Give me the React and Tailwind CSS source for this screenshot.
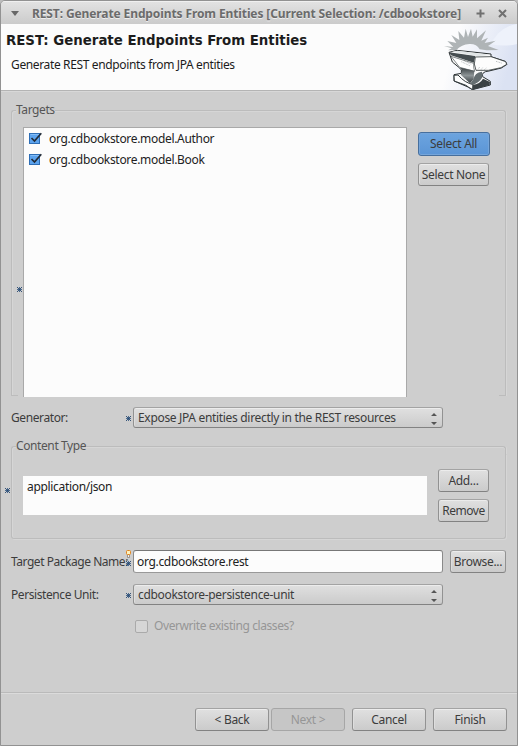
import React from "react";

const RAISED =
  "flex shrink-0 items-center whitespace-nowrap rounded-[3px] border border-t-[#a3a3a3] border-x-[#929292] border-b-[#828282] bg-linear-to-b from-[#e0e0e0] to-[#cbcbcb] shadow-[inset_0_1px_0_#ececec,inset_1px_0_0_#dedede]";

function Button({ className, children }) {
  return <button className={`${RAISED} h-[23px] justify-center ${className}`}>{children}</button>;
}

function Required({ className = "" }) {
  return (
    <svg className={`h-[5px] w-[5px] shrink-0 ${className}`} viewBox="0 0 5 5" shapeRendering="crispEdges">
      <path d="M2 0h1v5h-1zM0 2h5v1h-5z" fill="#4a6a8e" />
      <path d="M0 0h1v1h-1zM4 0h1v1h-1zM1 1h1v1h-1zM3 1h1v1h-1zM1 3h1v1h-1zM3 3h1v1h-1zM2 2h1v1h-1zM0 4h1v1h-1zM4 4h1v1h-1z" fill="#1d3f6a" opacity=".85" />
    </svg>
  );
}

function Combo({ className, children }) {
  return (
    <div className={`${RAISED} h-[21px] w-[310px] justify-between pl-1 pr-[5px] ${className}`}>
      <span>{children}</span>
      <svg className="mt-0.5 h-3 w-[6px]" viewBox="0 0 6 12">
        <path d="M3 0L6 3H0zM0 9H6L3 12z" fill="#555" />
      </svg>
    </div>
  );
}

function Checked() {
  return (
    <svg className="-mt-px h-[13px] w-[14px] shrink-0" viewBox="0 0 14 13">
      <rect x=".5" y="1.5" width="10" height="10" fill="#5ca3ee" stroke="#2d6db5" />
      <path d="M1.5 2.5H10" stroke="#83bdf7" />
      <path d="M2.5 6L5.5 9L12.3 1.2" fill="none" stroke="#202b38" strokeWidth="1.7" />
    </svg>
  );
}

function Anvil() {
  return (
    <svg className="h-[66px] w-[77px] shrink-0" viewBox="0 6 231 198">
      <defs>
        <linearGradient id="sky" x1="0" x2="1" y1="0" y2=".25">
          <stop offset="0.25" stopColor="#fcfcfd" />
          <stop offset="1" stopColor="#dbe2f3" />
        </linearGradient>
        <linearGradient id="iron" x1="0" x2="0" y1="0" y2="1">
          <stop offset="0" stopColor="#3b4144" />
          <stop offset=".5" stopColor="#8d9496" />
          <stop offset="1" stopColor="#373d40" />
        </linearGradient>
      </defs>
      <path d="M0 6H231V204H0z" fill="url(#sky)" />
      <path d="M175 34Q200 10 231 6V66Q195 75 150 66z" fill="#eef2fb" />
      <path
        d="M12 72L40 75L22 57L49 63L34 39L58 54L55 27L72 47L77 20L84 45L93 20L98 44L111 22L111 49L138 25L124 56L144 47L134 63L167 56L144 72L176 84L140 85L119 82Q110 65 88 66Q65 68 49 84L24 85L35 79z"
        fill="#afb4b6"
      />
      <path
        d="M27 91L51 85L153 96L153 104L196 118L201 127L184 138L147 147Q123 149 128 164L151 178L151 189L97 203L84 195L42 177L42 158L64 154Q67 142 59 138L37 120z"
        fill="#fafafa"
        stroke="#292f31"
        strokeWidth="3"
        strokeLinejoin="round"
      />
      <path d="M27 91L106 102L102 122L33 100z" fill="#464e51" />
      <path d="M35 89L53 86L150 98L116 103z" fill="#e1e5e6" />
      <path d="M33 103L101 124Q100 139 104 148L59 136z" fill="#fff" stroke="#444b4d" strokeWidth="2" />
      <path d="M62 137L103 146L101 171L90 184L62 158Q69 148 62 137z" fill="url(#iron)" />
      <path d="M106 105L153 104L197 119L200 127L183 137L145 145L108 145Q99 127 106 105z" fill="#fdfdfd" stroke="#363d3f" strokeWidth="2.5" />
      <path d="M42 160L54 159Q76 184 99 187L98 203L85 195L78 190L43 177z" fill="#fdfdfd" stroke="#30383b" strokeWidth="3" />
      <path d="M90 186L100 172Q104 151 126 149L128 164Q117 184 97 188z" fill="#656e71" />
      <path d="M98 188Q120 187 129 170L150 180L149 189L98 203z" fill="#3b4245" />
      <path d="M64 119L91 132M71 116L94 127M114 142L119 135M123 143L128 137M133 143L139 138M168 118L187 124" stroke="#777f82" strokeWidth="1.5" strokeDasharray="3 2" />
    </svg>
  );
}

function Legend({ children }) {
  return (
    <div className="flex h-4 shrink-0 items-center">
      <span className="h-2 w-[5px] self-end rounded-tl-[3px] border-l border-t border-[#bcbcbc] shadow-[inset_1px_1px_0_#d6d6d6]" />
      <span className="tracking-[-0.4px] text-[#555]">{children}</span>
      <span className="h-2 flex-1 self-end rounded-tr-[3px] border-r border-t border-[#bcbcbc] shadow-[inset_0_1px_0_#d6d6d6,1px_0_0_#d6d6d6]" />
    </div>
  );
}

export default function App() {
  return (
    <div className="h-[746px] w-[518px] bg-[#bdbdbd] font-['Noto_Sans',sans-serif] text-[12px] leading-4 tracking-[-0.32px] text-[#3c3c3c]">
      <div className="flex h-full flex-col overflow-hidden rounded-t-[5px] border border-[#929292] bg-[#cecece]">
        <header className="flex h-[23px] shrink-0 items-center border-t border-[#f0f0f0] bg-linear-to-b from-[#e2e2e2] to-[#cbcbcb] text-[#6b6b6b]">
          <svg className="ml-2.5 h-[5px] w-2" viewBox="0 0 8 5">
            <path d="M0 0H8L4 5z" fill="#686868" />
          </svg>
          <h1 className="ml-[13px] mt-px w-[436px] whitespace-nowrap text-[12px] font-bold tracking-[-0.11px] [text-shadow:0_1px_0_#eee]">
            REST: Generate Endpoints From Entities [Current Selection: /cdbookstore]
          </h1>
          <svg className="ml-2 h-[9px] w-[32px]" viewBox="0 0 32 9">
            <path d="M4.5 .5v8M.5 4.5h8" stroke="#707070" strokeWidth="2" />
            <path d="M23 1L30 8M30 1L23 8" stroke="#707070" strokeWidth="2" />
          </svg>
        </header>

        <section className="flex h-[67px] shrink-0 justify-between border-b border-[#b4b4b4] bg-[#fcfcfc] text-[#1c1c1c]">
          <div className="whitespace-nowrap">
            <h2 className="ml-[5px] mt-[9px] font-['DejaVu_Sans',sans-serif] text-[13.33px] font-bold tracking-normal">
              REST: Generate Endpoints From Entities
            </h2>
            <p className="ml-2.5 mt-2 tracking-[-0.36px]">Generate REST endpoints from JPA entities</p>
          </div>
          <Anvil />
        </section>

        <main className="flex flex-1 flex-col border-t border-[#d8d8d8]">
          <section className="ml-2.5 mt-[10px] flex h-[294px] w-[495px] shrink-0 flex-col">
            <Legend>Targets</Legend>
            <div className="flex h-[278px] shrink-0 border-x border-[#bcbcbc] shadow-[inset_1px_0_0_#d6d6d6,1px_0_0_#d6d6d6]">
              <div className="flex w-[11px] shrink-0 flex-col justify-between">
                <Required className="ml-[5px] mt-[169px]" />
                <span className="w-1.5 border-b border-[#bcbcbc]" />
              </div>
              <ul className="mt-[9px] h-[270px] w-[384px] shrink-0 border border-b-0 border-[#a9a9a9] bg-[#fcfcfc] pl-[5px] pt-[3px] text-[#222]">
                <li className="flex h-[21px] items-center gap-1.5 pb-[5px]">
                  <Checked />
                  org.cdbookstore.model.Author
                </li>
                <li className="flex h-[21px] items-center gap-1.5 pb-[5px]">
                  <Checked />
                  org.cdbookstore.model.Book
                </li>
              </ul>
              <div className="ml-[11px] mt-[14px] flex flex-col gap-[7px]">
                <button className="flex h-6 w-[72px] items-center justify-center whitespace-nowrap rounded-[3px] border border-[#466f9e] bg-linear-to-b from-[#6ca4df] to-[#5b95d6] pr-px shadow-[inset_0_0_0_1px_#75a5da]">
                  Select All
                </button>
                <Button className="w-[71px]">Select None</Button>
              </div>
              <span className="ml-auto w-1.5 self-stretch border-b border-[#bcbcbc]" />
            </div>
          </section>

          <div className="ml-2.5 mt-[11px] flex h-[21px] shrink-0 items-center">
            <span className="w-[115px] whitespace-nowrap tracking-[-0.4px]">Generator:</span>
            <Required className="mt-0.5" />
            <Combo className="ml-0.5">Expose JPA entities directly in the REST resources</Combo>
          </div>

          <section className="ml-2.5 mt-[10px] flex h-[101px] w-[495px] shrink-0 flex-col">
            <Legend>Content Type</Legend>
            <div className="flex flex-1 rounded-b-[3px] border border-t-0 border-[#bcbcbc] shadow-[inset_1px_0_0_#d6d6d6,1px_1px_0_#d6d6d6]">
              <Required className="-ml-[7px] mt-[34px]" />
              <div className="ml-[13px] mt-[22px] h-[39px] w-[404px] bg-[#fcfcfc] pl-1 pt-[3px] text-[#222]">application/json</div>
              <div className="ml-[11px] mt-[15px] flex flex-col gap-[7px]">
                <Button className="w-[51px]">Add...</Button>
                <Button className="w-[51px] tracking-[-0.45px]">Remove</Button>
              </div>
            </div>
          </section>

          <div className="ml-2.5 mt-[11px] flex h-[23px] shrink-0 items-center">
            <span className="w-[115px] whitespace-nowrap tracking-[-0.46px]">Target Package Name:</span>
            <span className="flex w-[5px] flex-col">
              <svg className="-mt-2 mb-[3px] h-2 w-[5px]" viewBox="0 0 5 8">
                <rect x=".5" y=".5" width="4" height="4" rx="1" fill="#fff2bd" stroke="#e08420" />
                <path d="M1.5 5v2.5h2V5" fill="#eee" stroke="#8b8175" strokeWidth=".8" />
              </svg>
              <Required />
            </span>
            <div className="ml-0.5 flex h-[23px] w-[310px] items-center rounded-[3px] border border-t-[#777] border-x-[#8a8a8a] border-b-[#999] bg-[#fcfcfc] pl-[3px] text-[#222]">
              org.cdbookstore.rest
            </div>
            <Button className="ml-[7px] w-[56px]">Browse...</Button>
          </div>

          <div className="ml-2.5 mt-[11px] flex h-[21px] shrink-0 items-center">
            <span className="w-[115px] whitespace-nowrap tracking-[-0.42px]">Persistence Unit:</span>
            <Required className="mt-0.5" />
            <Combo className="ml-0.5">cdbookstore-persistence-unit</Combo>
          </div>

          <label className="ml-[134px] mt-[13px] flex h-4 shrink-0 items-center tracking-[-0.41px] text-[#969696]">
            <span className="mr-1.5 h-[13px] w-[13px] rounded-[2px] border border-[#aaa] bg-[#d6d6d6]" />
            Overwrite existing classes?
          </label>
        </main>

        <footer className="flex h-[53px] shrink-0 justify-end border-t border-[#bababa] pr-2.5 pt-[15px] shadow-[inset_0_1px_0_#dbdbdb]">
          <Button className="w-[74px]">&lt; Back</Button>
          <button className="ml-0.5 flex h-[23px] w-[74px] items-center justify-center rounded-[3px] border border-[#a6a6a6] bg-[#c6c6c6] text-[#969696]">
            Next &gt;
          </button>
          <Button className="ml-[7px] w-[74px]">Cancel</Button>
          <Button className="ml-[7px] w-[74px]">Finish</Button>
        </footer>
      </div>
    </div>
  );
}
